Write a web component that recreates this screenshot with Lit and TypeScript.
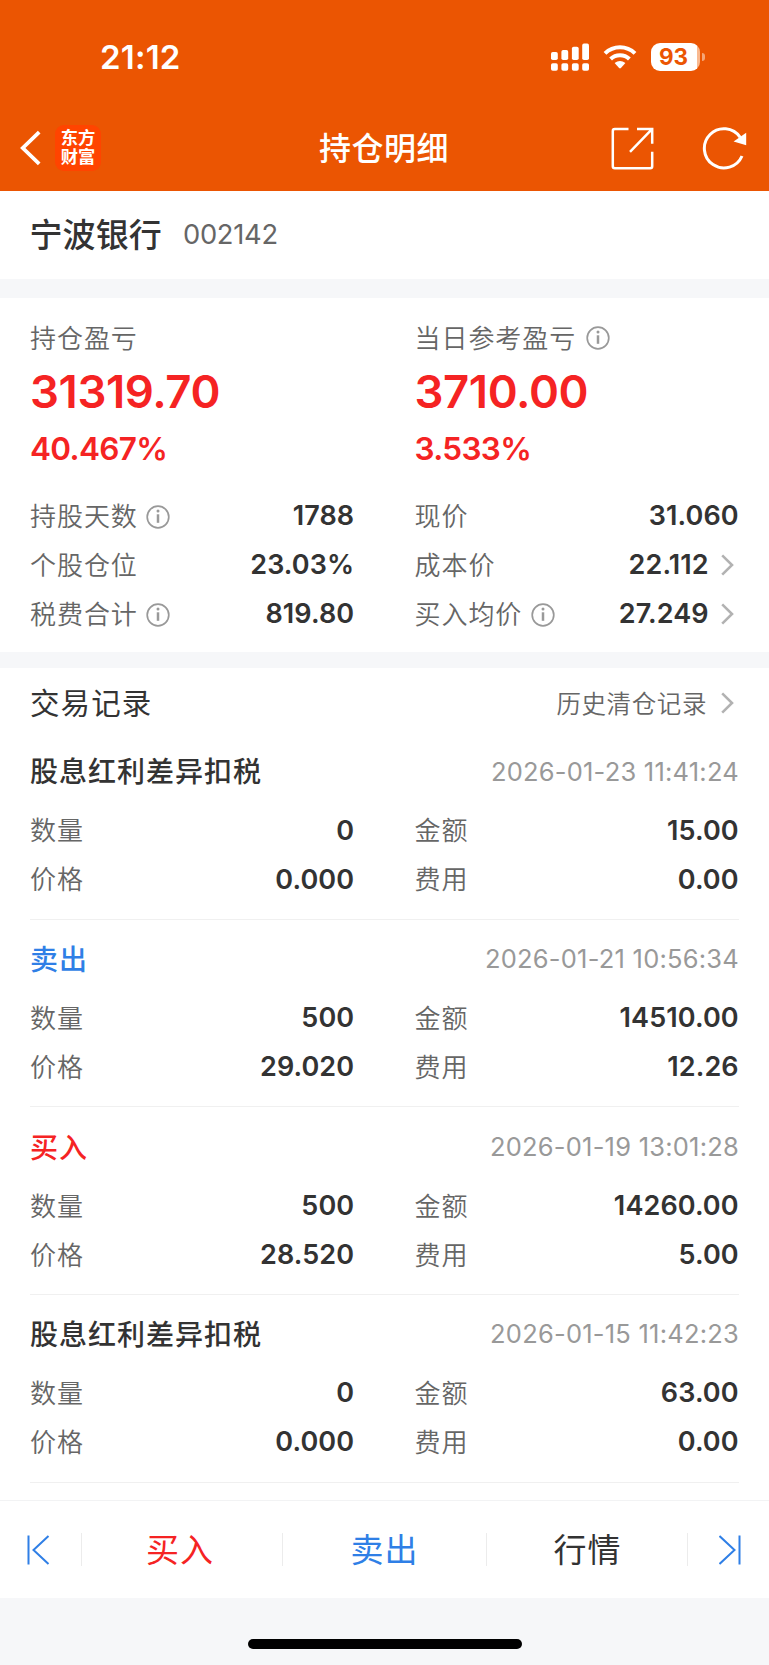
import { LitElement, html, svg, css, nothing } from "lit";
import { customElement, property } from "lit/decorators.js";
import { classMap } from "lit/directives/class-map.js";

type Field = { label: string; value: string; info?: boolean; link?: boolean };
type Trade = { kind: string; tone: string; time: string; fields: Field[] };

const trade = (kind: string, tone: string, time: string, v: string[]): Trade => ({
  kind, tone, time,
  fields: ["数量", "金额", "价格", "费用"].map((label, i) => ({ label, value: v[i] })),
});

const TRADES: Trade[] = [
  trade("股息红利差异扣税", "plain", "2026-01-23 11:41:24", ["0", "15.00", "0.000", "0.00"]),
  trade("卖出", "sell", "2026-01-21 10:56:34", ["500", "14510.00", "29.020", "12.26"]),
  trade("买入", "buy", "2026-01-19 13:01:28", ["500", "14260.00", "28.520", "5.00"]),
  trade("股息红利差异扣税", "plain", "2026-01-15 11:42:23", ["0", "63.00", "0.000", "0.00"]),
];

const SUMMARY: Field[] = [
  { label: "持股天数", value: "1788", info: true },
  { label: "现价", value: "31.060" },
  { label: "个股仓位", value: "23.03%" },
  { label: "成本价", value: "22.112", link: true },
  { label: "税费合计", value: "819.80", info: true },
  { label: "买入均价", value: "27.249", info: true, link: true },
];

const infoIcon = html`<svg class="info" width="24" height="24" viewBox="0 0 24 24" fill="none" stroke="#999">
  <circle cx="12" cy="12" r="10.8" stroke-width="1.7"/>
  <path d="M12 9.3V17.8" stroke-width="2.5"/><circle cx="12" cy="6.1" r="1.5" fill="#999" stroke="none"/></svg>`;
const chevron = html`<svg class="chev" width="13" height="22" viewBox="0 0 13 22" fill="none" stroke="#b2b2b2" stroke-width="2.6">
  <path d="M1.2 1.4L11 11L1.2 20.6"/></svg>`;

@customElement("field-row")
class FieldRow extends LitElement {
  @property({ attribute: false }) field!: Field;
  static styles = css`
    :host { display: flex; align-items: center; height: 49px; }
    .label { color: #666; font: 350 26px/34px "Noto Sans CJK SC", sans-serif; letter-spacing: 0.95px; padding-bottom: 2.4px; }
    .info { margin-left: 8.3px; margin-top: 1px; }
    .value { margin-left: auto; color: #333; font: 600 27px/34px Inter, sans-serif; letter-spacing: 0.1px; margin-right: 0.3px; }
    .chev { margin: 0 5px 0 12px; }
  `;
  render() {
    const f = this.field;
    return html`<span class="label">${f.label}</span>${f.info ? infoIcon : nothing}
      <span class="value">${f.value}</span>${f.link ? chevron : nothing}`;
  }
}

@customElement("status-bar")
class StatusBar extends LitElement {
  static styles = css`
    :host { display: flex; align-items: center; height: 30px; padding: 42px 64.5px 0 100px; color: #fff; }
    .time { font: 600 33px/30px Inter, sans-serif; letter-spacing: 0.2px; margin-right: auto; }
    .signal { margin-right: 14px; }
    .wifi { margin-right: 14px; }
    .battery { display: flex; align-items: center; }
    .level { width: 46px; height: 28px; border-radius: 9px; display: flex; padding-right: 3px;
      background: linear-gradient(90deg, #fff 45.5px, #f9b990 45.5px);
      color: #eb5502; font: 700 22.5px/28px Inter, sans-serif; justify-content: center; }
    .tip { width: 3px; height: 8px; margin-left: 2px; border-radius: 0 4px 4px 0; background: #f5a677; }
  `;
  render() {
    return html`
      <span class="time">21:12</span>
      <svg class="signal" width="38" height="28" viewBox="0 0 38 28" fill="#fff">
        ${[[0, 9], [10.4, 7], [20.9, 3.8], [31.2, 0.6]].map(([x, y]) => svg`
          <rect x=${x} y=${y} width="6.8" height=${17 - y} rx="1.8"/>
          <rect x=${x} y="20.2" width="6.8" height="7.6" rx="1.8"/>`)}
      </svg>
      <svg class="wifi" width="34" height="26" viewBox="0 0 34 26">
        <g fill="none" stroke="#fff" stroke-width="4">
          <path d="M2 9.4A21.5 21.5 0 0 1 32 9.4"/>
          <path d="M7.6 15A13.5 13.5 0 0 1 26.4 15"/>
        </g>
        <path d="M11.6 19.1Q17 14.7 22.4 19.1L17.9 24Q17 24.8 16.1 24Z" fill="#fff"/>
      </svg>
      <span class="battery"><span class="level">93</span><span class="tip"></span></span>`;
  }
}

@customElement("nav-bar")
class NavBar extends LitElement {
  static styles = css`
    :host { display: grid; grid-template-columns: 1fr auto 1fr; align-items: center; height: 87px; margin-top: 32px; }
    .left { display: flex; align-items: center; padding-left: 20px; }
    .logo { width: 46px; height: 46px; margin-left: 13px; border-radius: 9px; background: #ff4400; color: #fff;
      font: 700 17.3px/19.5px "Liberation Serif", "Noto Sans CJK SC", serif; box-sizing: border-box; padding-top: 4px; text-align: center; }
    .title { color: #fff; font: 500 32px/40px "Noto Sans CJK SC", sans-serif; letter-spacing: 0.5px; padding-bottom: 3px; margin-right: 1px; }
    .right { display: flex; align-items: center; justify-content: flex-end; gap: 48px; padding: 1px 21px 0 0; }
  `;
  render() {
    return html`
      <div class="left">
        <svg width="22" height="36" viewBox="0 0 22 36" fill="none" stroke="#fff" stroke-width="3.8" stroke-linecap="butt">
          <path d="M19.2 2.2L2.8 18L19.2 33.8"/></svg>
        <div class="logo">东方<br>财富</div>
      </div>
      <div class="title">持仓明细</div>
      <div class="right">
        <svg width="43" height="43" viewBox="0 0 43 43" fill="none" stroke="#fff" stroke-width="2.5">
          <path d="M17.5 2H3.8Q1.8 2 1.8 4V39.3Q1.8 41.3 3.8 41.3H39.2Q41.2 41.3 41.2 39.3V24.8"/>
          <path d="M26 2H41.2V16.8M41 2.2L19 24.8"/></svg>
        <svg width="46" height="46" viewBox="0 0 46 46" fill="none" stroke="#fff" stroke-width="3">
          <path d="M40 31A19.6 19.6 0 1 1 38.2 12.4"/>
          <path d="M44.2 7.8V20.2L31.6 16.6Z" fill="#fff" stroke="none"/></svg>
      </div>`;
  }
}

@customElement("trade-item")
class TradeItem extends LitElement {
  @property({ attribute: false }) trade!: Trade;
  static styles = css`
    :host { display: block; height: 186.67px; border-bottom: 1px solid #f0f0f0; }
    .head { display: flex; align-items: center; justify-content: space-between; height: 74px; padding-top: 5px; box-sizing: border-box; }
    .kind { font: 500 28px/40px "Noto Sans CJK SC", sans-serif; letter-spacing: 1px; padding-bottom: 2.6px; color: #333; }
    .kind.buy { color: #f52323; }
    .kind.sell { color: #2f7fe6; }
    .time { font: 400 25.5px/40px Inter, sans-serif; color: #999; letter-spacing: 0.22px; }
    .grid { display: grid; grid-template-columns: 1fr 1fr; column-gap: 60px; }
  `;
  render() {
    const t = this.trade;
    return html`
      <div class="head"><span class=${classMap({ kind: true, [t.tone]: true })}>${t.kind}</span><span class="time">${t.time}</span></div>
      <div class="grid">${t.fields.map((f) => html`<field-row .field=${f}></field-row>`)}</div>`;
  }
}

@customElement("app-root")
class AppRoot extends LitElement {
  static styles = css`
    :host { display: flex; flex-direction: column; height: 1665px; background: #f6f7f9; font-family: "Noto Sans CJK SC", sans-serif; overflow: hidden; }
    .top { background: #eb5502; height: 191px; }
    .card { background: #fff; padding: 0 30px; box-sizing: border-box; }
    .stock { height: 88px; display: flex; align-items: center; gap: 21px; margin-bottom: 19px; padding: 0 29.5px 2px; }
    .name { font: 500 33px/44px "Noto Sans CJK SC", sans-serif; color: #333; padding-bottom: 3px; letter-spacing: 0.1px; }
    .code { font: 400 27.3px/44px Inter, sans-serif; color: #666; letter-spacing: -0.25px; padding-top: 2px; }
    .summary { height: 354px; margin-bottom: 16px; padding-top: 20px; }
    .grid { display: grid; grid-template-columns: 1fr 1fr; column-gap: 60px; }
    .label { display: flex; align-items: center; height: 38px; color: #666; font: 350 26px/34px "Noto Sans CJK SC", sans-serif; letter-spacing: 0.95px; }
    .info { margin-left: 9.5px; margin-top: 1px; }
    .amount { font: 600 45.5px/56px Inter, sans-serif; color: #f52323; padding-top: 8px; letter-spacing: -0.4px; }
    .percent { font: 600 31.5px/40px Inter, sans-serif; color: #f52323; padding-top: 9px; margin-bottom: 22.5px; letter-spacing: -0.65px; }
    .records { height: 832px; }
    .heading { display: flex; align-items: center; height: 64px; padding-top: 6px; box-sizing: border-box; }
    .heading .main { font-size: 29.5px; line-height: 40px; letter-spacing: 1.1px; color: #333; margin-right: auto; padding-bottom: 4px; }
    .heading .more { font: 350 24.5px/40px "Noto Sans CJK SC", sans-serif; letter-spacing: 0.6px; color: #666; padding-bottom: 1px; }
    .chev { margin: 0 5px 0 14px; }
    .toolbar { display: flex; align-items: center; background: #fff; height: 98px; border-top: 1px solid #f2f3f4; box-sizing: border-box; }
    .edge { width: 81px; height: 33px; display: flex; align-items: center; box-sizing: border-box; }
    .edge.l { padding-left: 27px; }
    .edge.r { padding-left: 31px; border-left: 1px solid #ececec; width: 82px; }
    .tab { width: 201px; box-sizing: border-box; padding-left: 1px; height: 33px; border-left: 1px solid #ececec; font-size: 33px; line-height: 30px; text-align: center; letter-spacing: 1px; color: #333; }
    .tab.buy { color: #f52323; padding: 0 4px 0 0; }
    .tab.sell { color: #2f7fe6; width: 204px; padding: 0; }
    .home { width: 274px; height: 10px; border-radius: 5px; background: #000; margin: 41px auto 0; }
  `;
  render() {
    return html`
      <header class="top"><status-bar></status-bar><nav-bar></nav-bar></header>
      <section class="card stock"><span class="name">宁波银行</span><span class="code">002142</span></section>
      <section class="card summary">
        <div class="grid">
          <div><div class="label">持仓盈亏</div><div class="amount">31319.70</div><div class="percent">40.467%</div></div>
          <div><div class="label">当日参考盈亏${infoIcon}</div><div class="amount">3710.00</div><div class="percent">3.533%</div></div>
          ${SUMMARY.map((f) => html`<field-row .field=${f}></field-row>`)}
        </div>
      </section>
      <section class="card records">
        <div class="heading"><span class="main">交易记录</span><span class="more">历史清仓记录</span>${chevron}</div>
        ${TRADES.map((t) => html`<trade-item .trade=${t}></trade-item>`)}
      </section>
      <nav class="toolbar">
        <div class="edge l"><svg width="23" height="30" viewBox="0 0 23 30" fill="none" stroke="#2f7fe6" stroke-width="2"><path d="M1.5 0.5V29.5M21.5 1L6.5 15L21.5 29"/></svg></div>
        <div class="tab buy">买入</div><div class="tab sell">卖出</div><div class="tab">行情</div>
        <div class="edge r"><svg width="23" height="30" viewBox="0 0 23 30" fill="none" stroke="#2f7fe6" stroke-width="2"><path d="M20.5 0.5V29.5M0.5 1L15.5 15L0.5 29"/></svg></div>
      </nav>
      <div class="home"></div>`;
  }
}
